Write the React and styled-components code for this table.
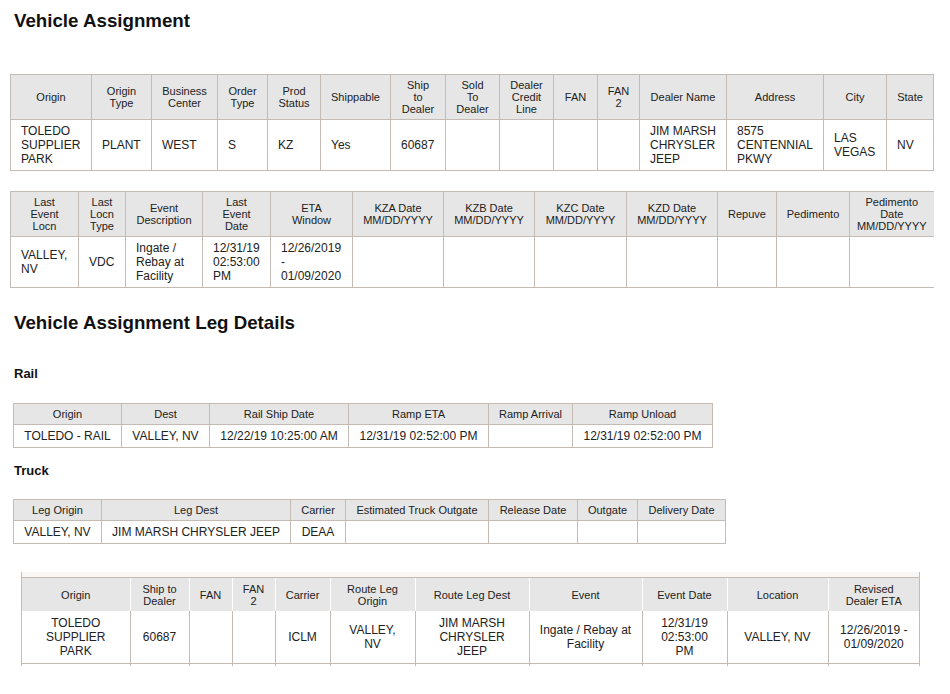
import React from 'react';
import styled, { createGlobalStyle } from 'styled-components';

const line = '#c3bbb4';
const headBg = '#e6e6e6';

const GlobalStyle = createGlobalStyle`
  html, body {
    margin: 0;
    background: #fff;
  }
  body {
    font-family: "Liberation Sans", Arial, sans-serif;
    color: #222;
  }
`;

const Page = styled.div`
  padding: 10px 0 20px 10px;
`;

const Title = styled.h2`
  margin: ${p => p.$top || 0}px 0 0 4px;
  font-size: 18.72px;
  line-height: 21px;
  font-weight: bold;
  color: #111;
`;

const Label = styled.h4`
  margin: ${p => p.$top}px 0 0 4px;
  font-size: 13px;
  line-height: 16px;
  font-weight: bold;
  color: #111;
`;

const Table = styled.table`
  border-collapse: collapse;
  table-layout: fixed;
  margin: ${p => p.$top || 0}px 0 0 ${p => p.$left || 0}px;
`;

const Row = styled.tr`
  height: ${p => p.$h}px;
`;

const Head = styled.th`
  background: ${headBg};
  font-size: 11px;
  line-height: 12px;
  font-weight: normal;
  color: #222;
  text-align: center;
  vertical-align: middle;
  padding: 0 2px;
  white-space: pre-line;
  border: 1px solid ${line};
  ${p => p.$open && 'border-right: none;'}
`;

const Cell = styled.td`
  font-size: 12px;
  line-height: 14px;
  color: #222;
  text-align: ${p => p.$align};
  vertical-align: middle;
  padding: ${p => (p.$align === 'left' ? '0 2px 0 10px' : '0 2px')};
  white-space: pre-line;
  border: 1px solid ${line};
  ${p => p.$open && 'border-right: none;'}
`;

const ScrollBox = styled.div`
  margin: 28px 0 0 11px;
  width: 899px;
  box-sizing: border-box;
  border-left: 1px solid ${line};
  border-right: 1px solid ${line};
`;

const Strip = styled.div`
  height: 5px;
  background: #f9f7f5;
  border-bottom: 1px solid ${line};
`;

const LegHead = styled.th`
  background: ${headBg};
  font-size: 11px;
  line-height: 12px;
  font-weight: normal;
  color: #222;
  text-align: center;
  vertical-align: middle;
  padding: 0 2px;
  white-space: pre-line;
  border: none;
  border-right: ${p => (p.$last ? 'none' : '1px solid #fff')};
`;

const LegCell = styled.td`
  font-size: 12px;
  line-height: 14px;
  color: #222;
  text-align: center;
  vertical-align: middle;
  padding: 0 2px;
  white-space: pre-line;
  border-bottom: ${p => (p.$tail ? 'none' : `1px solid ${line}`)};
  border-right: ${p => (p.$last ? 'none' : `1px solid ${line}`)};
`;

const assignment = {
  cols: [81, 60, 66, 50, 53, 70, 55, 54, 54, 44, 42, 87, 97, 63, 47],
  heads: ['Origin', 'Origin\nType', 'Business\nCenter', 'Order\nType', 'Prod\nStatus', 'Shippable',
    'Ship\nto\nDealer', 'Sold\nTo\nDealer', 'Dealer\nCredit\nLine', 'FAN', 'FAN\n2', 'Dealer Name',
    'Address', 'City', 'State'],
  row: ['TOLEDO\nSUPPLIER\nPARK', 'PLANT', 'WEST', 'S', 'KZ', 'Yes', '60687', '', '', '', '',
    'JIM MARSH\nCHRYSLER\nJEEP', '8575\nCENTENNIAL\nPKWY', 'LAS\nVEGAS', 'NV'],
};

const events = {
  cols: [68, 47, 77, 68, 82, 91, 91, 92, 91, 59, 73, 84],
  heads: ['Last\nEvent\nLocn', 'Last\nLocn\nType', 'Event\nDescription', 'Last\nEvent\nDate', 'ETA\nWindow',
    'KZA Date\nMM/DD/YYYY', 'KZB Date\nMM/DD/YYYY', 'KZC Date\nMM/DD/YYYY', 'KZD Date\nMM/DD/YYYY',
    'Repuve', 'Pedimento', 'Pedimento\nDate\nMM/DD/YYYY'],
  row: ['VALLEY,\nNV', 'VDC', 'Ingate /\nRebay at\nFacility', '12/31/19\n02:53:00\nPM',
    '12/26/2019\n-\n01/09/2020', '', '', '', '', '', '', ''],
};

const rail = {
  cols: [108, 88, 139, 140, 84, 140],
  heads: ['Origin', 'Dest', 'Rail Ship Date', 'Ramp ETA', 'Ramp Arrival', 'Ramp Unload'],
  row: ['TOLEDO - RAIL', 'VALLEY, NV', '12/22/19 10:25:00 AM', '12/31/19 02:52:00 PM', '', '12/31/19 02:52:00 PM'],
};

const truck = {
  cols: [88, 189, 55, 143, 89, 60, 88],
  heads: ['Leg Origin', 'Leg Dest', 'Carrier', 'Estimated Truck Outgate', 'Release Date', 'Outgate', 'Delivery Date'],
  row: ['VALLEY, NV', 'JIM MARSH CHRYSLER JEEP', 'DEAA', '', '', '', ''],
};

const legs = {
  cols: [108, 59, 43, 43, 55, 85, 114, 113, 85, 101, 91],
  heads: ['Origin', 'Ship to\nDealer', 'FAN', 'FAN\n2', 'Carrier', 'Route Leg\nOrigin', 'Route Leg Dest',
    'Event', 'Event Date', 'Location', 'Revised\nDealer ETA'],
  row: ['TOLEDO\nSUPPLIER\nPARK', '60687', '', '', 'ICLM', 'VALLEY,\nNV', 'JIM MARSH\nCHRYSLER\nJEEP',
    'Ingate / Rebay at\nFacility', '12/31/19\n02:53:00\nPM', 'VALLEY, NV', '12/26/2019 -\n01/09/2020'],
};

function Grid({ data, top, left, headH, rowH, align, openEnd }) {
  const last = data.cols.length - 1;
  return (
    <Table $top={top} $left={left}>
      <colgroup>
        {data.cols.map((w, i) => <col key={i} style={{ width: w }} />)}
      </colgroup>
      <thead>
        <Row $h={headH}>
          {data.heads.map((h, i) => <Head key={i} $open={openEnd && i === last}>{h}</Head>)}
        </Row>
      </thead>
      <tbody>
        <Row $h={rowH}>
          {data.row.map((c, i) => <Cell key={i} $align={align} $open={openEnd && i === last}>{c}</Cell>)}
        </Row>
      </tbody>
    </Table>
  );
}

function LegTable() {
  const last = legs.cols.length - 1;
  return (
    <ScrollBox>
      <Strip />
      <Table>
        <colgroup>
          {legs.cols.map((w, i) => <col key={i} style={{ width: w }} />)}
        </colgroup>
        <thead>
          <Row $h={33}>
            {legs.heads.map((h, i) => <LegHead key={i} $last={i === last}>{h}</LegHead>)}
          </Row>
        </thead>
        <tbody>
          <Row $h={52}>
            {legs.row.map((c, i) => <LegCell key={i} $last={i === last}>{c}</LegCell>)}
          </Row>
          <Row $h={3}>
            {legs.row.map((c, i) => <LegCell key={i} $tail $last={i === last} />)}
          </Row>
        </tbody>
      </Table>
    </ScrollBox>
  );
}

export default function App() {
  return (
    <>
      <GlobalStyle />
      <Page>
        <Title>Vehicle Assignment</Title>
        <Grid data={assignment} top={43} headH={45} rowH={51} align="left" />
        <Grid data={events} top={20} headH={45} rowH={51} align="left" openEnd />
        <Title $top={24}>Vehicle Assignment Leg Details</Title>
        <Label $top={33}>Rail</Label>
        <Grid data={rail} top={21} left={3} headH={21} rowH={23} align="center" />
        <Label $top={15}>Truck</Label>
        <Grid data={truck} top={20} left={3} headH={21} rowH={23} align="center" />
        <LegTable />
      </Page>
    </>
  );
}
